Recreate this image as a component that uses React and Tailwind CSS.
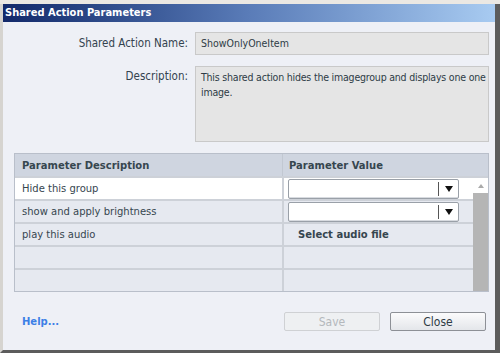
import React from "react";

const LABEL = "text-[11.5px] text-[#34434f] [font-family:'DejaVu_Sans_Condensed','Liberation_Sans',sans-serif]";
const CELL = "text-[10px] text-[#36464f] [font-family:'DejaVu_Sans',sans-serif]";
const BOX = "text-[10.5px] text-[#2e3c46] [font-family:'DejaVu_Sans_Condensed',sans-serif]";

function Dropdown() {
  return (
    <div className="w-[171px] h-[20px] bg-white border border-[#9aa0a8] rounded-[2px] flex items-center justify-end shadow-[inset_0_-1px_0_#d8dbe0]">
      <div className="w-px h-[14px] bg-[#555]" />
      <div className="w-[19px] flex justify-center">
        <svg width="8" height="6" viewBox="0 0 8 6"><path d="M0 0H8L4 6Z" fill="#111" /></svg>
      </div>
    </div>
  );
}

const ROWS = [
  { desc: "Hide this group", kind: "drop", bg: "bg-white" },
  { desc: "show and apply brightness", kind: "drop", bg: "bg-[#e6e9f0]" },
  { desc: "play this audio", kind: "audio", bg: "bg-[#e6e9f0]" },
  { desc: "", kind: "", bg: "bg-[#e6e9f0]" },
  { desc: "", kind: "", bg: "bg-[#e6e9f0]" },
];

export default function App() {
  return (
    <div className="w-[500px] h-[353px] bg-[#ebe8e3] pt-[4px] flex">
      <div className="flex-1 flex flex-col border-l-[3px] border-l-[#d6d4d0] border-r-[5px] border-r-[#5c5c5c] border-b-[3px] border-b-[#5c5c5c]">
        {/* TITLE BAR */}
        <div className="h-[18px] bg-gradient-to-r from-[#13296a] via-[#5a7cb8] to-[#a8cbf1] flex items-center pl-[2px]">
          <span className="text-white font-bold text-[11px] [font-family:'DejaVu_Sans_Condensed',sans-serif]">Shared Action Parameters</span>
        </div>

        <div className="flex-1 bg-[#eef0f6] flex flex-col pl-[11px] pr-[6px] pt-[10px]">
          {/* NAME */}
          <div className="flex items-center">
            <div className={`w-[181px] shrink-0 text-right pr-[7px] ${LABEL}`}>Shared Action Name:</div>
            <div className={`w-[294px] h-[23px] bg-[#e5e5e5] border border-[#c9c9c9] flex items-center pl-[5px] ${BOX}`}>ShowOnlyOneItem</div>
          </div>

          {/* DESCRIPTION */}
          <div className="flex items-start mt-[11px]">
            <div className={`w-[181px] shrink-0 text-right pr-[7px] pt-[2px] ${LABEL}`}>Description:</div>
            <div className={`w-[294px] h-[76px] overflow-hidden whitespace-nowrap bg-[#e5e5e5] border border-[#c9c9c9] pl-[5px] pt-[3px] leading-[15px] tracking-[-0.2px] ${BOX}`}>
              This shared action hides the imagegroup and displays one one
              <br />
              image.
            </div>
          </div>

          {/* TABLE */}
          <div className="mt-[11px] w-[475px] border border-[#b9bfca] flex flex-col">
            <div className="h-[22px] bg-[#cfd5e0] flex items-center">
              <div className={`w-[267px] pl-[7px] font-bold ${CELL}`}>Parameter Description</div>
              <div className="w-px self-stretch bg-[#c2c8d2]" />
              <div className={`pl-[6px] font-bold ${CELL}`}>Parameter Value</div>
            </div>
            <div className="flex">
              <div className="flex-1 flex flex-col">
                {ROWS.map((r, i) => (
                  <div key={i} className={`h-[23px] flex items-stretch border-t-2 border-[#cdd1d8] ${r.bg}`}>
                    <div className={`w-[267px] pl-[7px] flex items-center ${CELL}`}>{r.desc}</div>
                    <div className="w-[2px] bg-[#cdd1d8]" />
                    <div className="flex-1 flex items-center pl-[4px]">
                      {r.kind === "drop" && <Dropdown />}
                      {r.kind === "audio" && <span className={`pl-[10px] font-bold ${CELL}`}>Select audio file</span>}
                    </div>
                  </div>
                ))}
              </div>
              {/* SCROLLBAR */}
              <div className="w-[15px] flex flex-col bg-[#b8b8b8] border-t-2 border-[#cdd1d8]">
                <div className="h-[15px] bg-white flex items-center justify-center">
                  <svg width="6" height="4" viewBox="0 0 6 4"><path d="M0 4H6L3 0Z" fill="#aaa" /></svg>
                </div>
                <div className="flex-1 bg-[#b5b5b5]" />
              </div>
            </div>
          </div>

          {/* FOOTER */}
          <div className="flex items-center mt-[20px]">
            <span className="pl-[8px] text-[10px] font-bold text-[#3d80e6] [font-family:'DejaVu_Sans',sans-serif]">Help...</span>
            <div className="flex-1" />
            <button className="w-[96px] h-[19px] rounded-[2px] border border-[#cfd1d4] bg-[#eef0f2] text-[12px] text-[#b4b8bc] [font-family:'DejaVu_Sans_Condensed',sans-serif]">Save</button>
            <button className="ml-[10px] mr-[3px] w-[96px] h-[19px] rounded-[2px] border border-[#8d9096] bg-gradient-to-b from-[#fbfbfc] to-[#e4e6ea] text-[12px] text-[#2e3a44] [font-family:'DejaVu_Sans_Condensed',sans-serif]">Close</button>
          </div>
        </div>
      </div>
    </div>
  );
}
